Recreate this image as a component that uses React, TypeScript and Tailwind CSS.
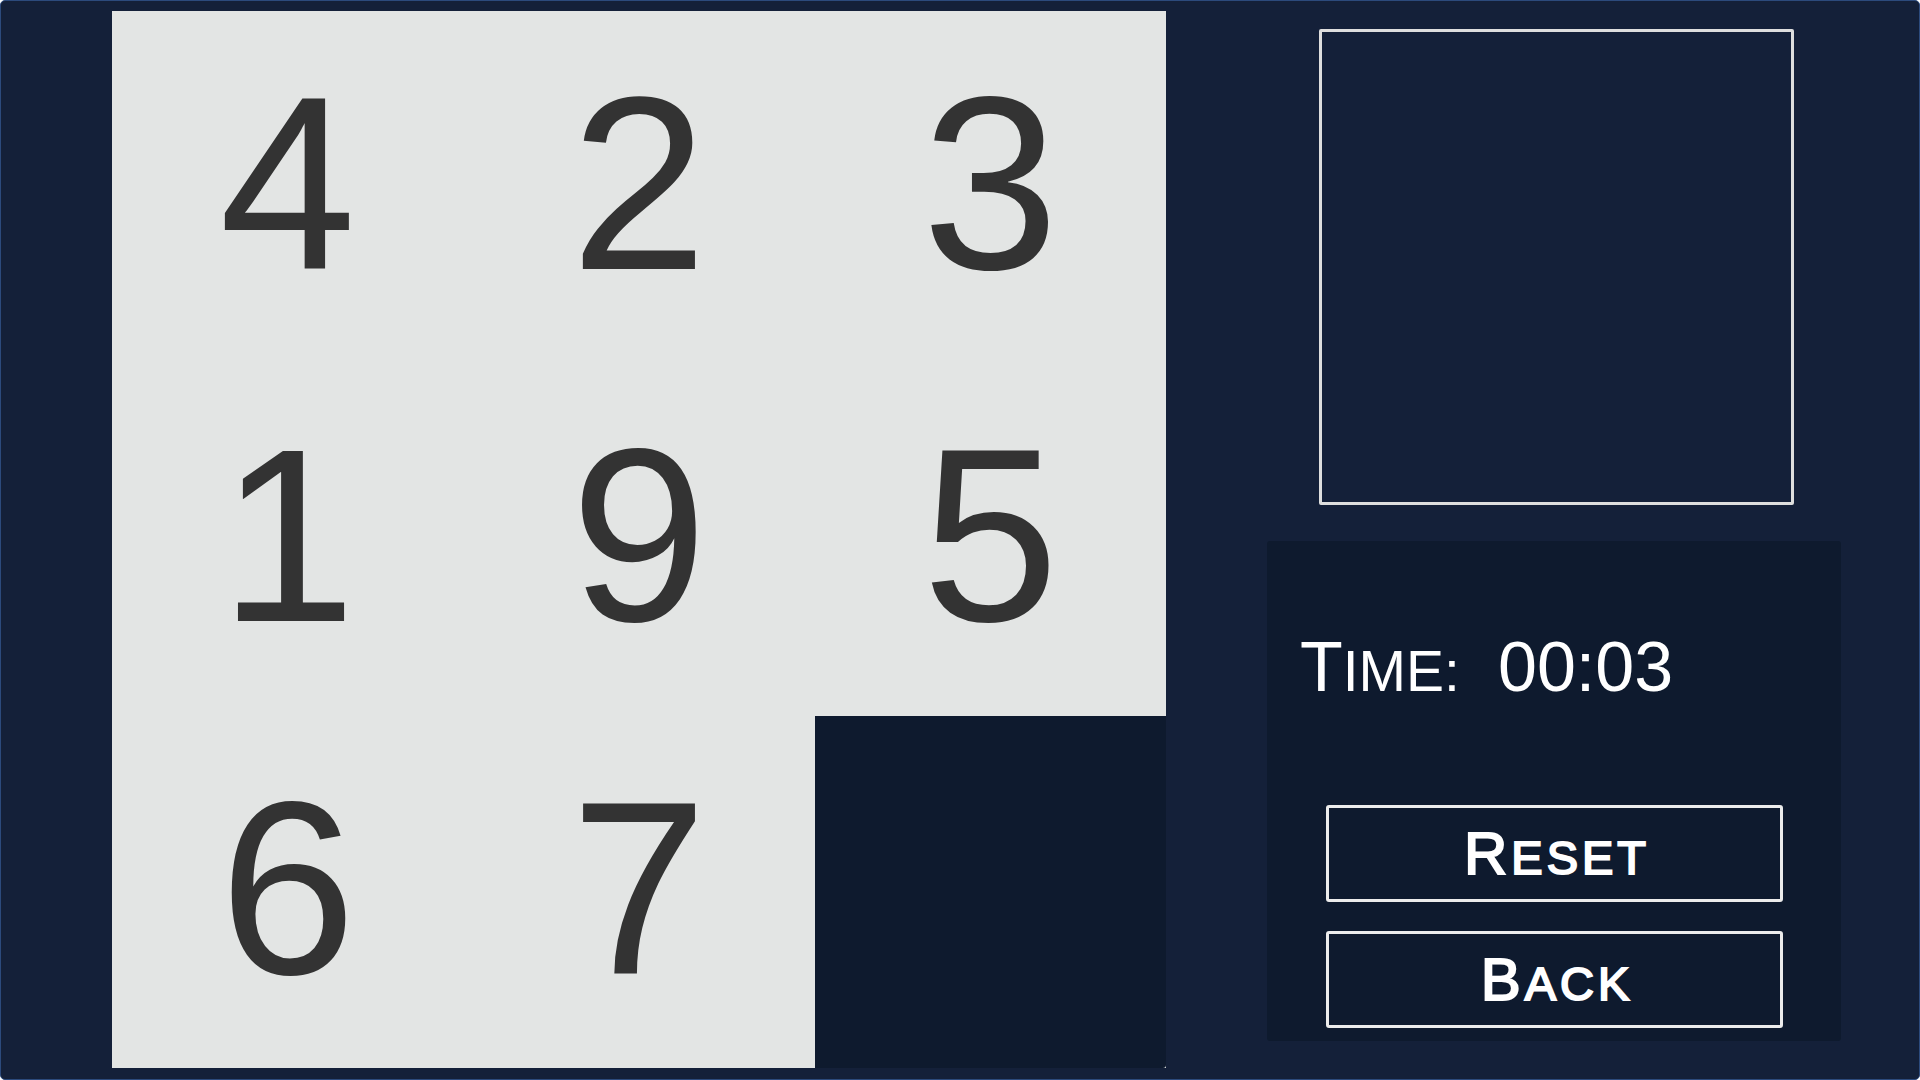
const tiles: (number | null)[] = [4, 2, 3, 1, 9, 5, 6, 7, null];

const SmallCaps = ({ word, big, small }: { word: string; big: string; small: string }) => {
    return (
        <span>
            <span className={big}>{word.charAt(0)}</span>
            <span className={small}>{word.slice(1).toUpperCase()}</span>
        </span>
    );
};

const App = () => {
    return (
        <div className="w-[1920px] h-[1080px] bg-[#142039] border border-[#2c4a7c] rounded-[5px] overflow-hidden flex font-['Liberation_Sans',Arial,sans-serif]">
            <div className="pl-[111px] pt-[10px]">
                <div className="w-[1054px] h-[1057px] bg-[#e3e5e4] grid grid-cols-3 grid-rows-3">
                    {tiles.map((t, i) =>
                        t === null ? (
                            <div key={i} className="bg-[#0e1a2e] rounded-br-[3px]"></div>
                        ) : (
                            <div key={i} className="flex items-center justify-center pb-[6px] text-[246px] leading-[246px] text-[#333333]">
                                {t}
                            </div>
                        )
                    )}
                </div>
            </div>

            <div className="ml-[101px] w-[574px] flex flex-col">
                <div className="ml-[52px] mt-[28px] w-[475px] h-[476px] border-[3px] border-[#dedede] rounded-[2px]"></div>

                <div className="mt-[36px] h-[500px] bg-[#0e1a2e] rounded-[3px] flex flex-col">
                    <div className="pt-[91px] pl-[33px] flex items-baseline text-white leading-[70px] h-[161px]">
                        <SmallCaps word="Time:" big="text-[70px]" small="text-[57px]" />
                        <span className="ml-[38px] text-[70px]">00:03</span>
                    </div>

                    <div className="mt-[103px] ml-[59px] flex flex-col gap-[29px]">
                        {["Reset", "Back"].map((label) => (
                            <button
                                key={label}
                                className="w-[457px] h-[97px] border-[3px] border-[#ececec] rounded-[3px] flex items-center justify-center pl-[5px] text-white tracking-[4px] leading-none [-webkit-text-stroke:2px_white]"
                            >
                                <SmallCaps word={label} big="text-[60px]" small="text-[47px]" />
                            </button>
                        ))}
                    </div>
                </div>
            </div>
        </div>
    );
};

export default App;
